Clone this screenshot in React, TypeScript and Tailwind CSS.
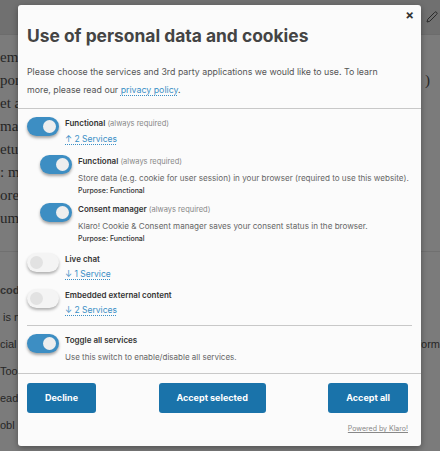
import React from "react";

function Toggle({ on }: { on: boolean }) {
  return on ? (
    <div className="flex h-[19px] w-[32px] shrink-0 items-center justify-end rounded-full bg-[#3d8ec3] pr-[3px] shadow-[0_2px_3px_rgba(0,0,0,0.35)]">
      <div className="h-[13px] w-[13px] rounded-full bg-[#eeeeee]" />
    </div>
  ) : (
    <div className="flex h-[19px] w-[32px] shrink-0 items-center justify-start rounded-full bg-[#f4f4f4] pl-[3px] shadow-[0_2px_3px_rgba(0,0,0,0.3)]">
      <div className="h-[13px] w-[13px] rounded-full bg-[#e2e2e2]" />
    </div>
  );
}

function Link({ children }: { children: React.ReactNode }) {
  return (
    <div className="mt-[3px] text-[8.5px] leading-[12px]">
      <span className="text-[#3a8fc6] underline decoration-dotted underline-offset-2">{children}</span>
    </div>
  );
}

function Group({
  on,
  title,
  required,
  link,
}: {
  on: boolean;
  title: string;
  required?: boolean;
  link: string;
}) {
  return (
    <div className="flex gap-[6px]">
      <Toggle on={on} />
      <div className="flex flex-col">
        <div className="text-[8px] leading-[12px] text-[#333]">
          <span className="font-semibold">{title}</span>
          {required && <span className="text-[7.5px] text-[#888]"> (always required)</span>}
        </div>
        <Link>{link}</Link>
      </div>
    </div>
  );
}

function Service({ title, desc }: { title: string; desc: string }) {
  return (
    <div className="flex gap-[6px] pl-[13px]">
      <Toggle on={true} />
      <div className="flex flex-col">
        <div className="text-[8px] leading-[12px] text-[#333]">
          <span className="font-semibold">{title}</span>
          <span className="text-[7.5px] text-[#888]"> (always required)</span>
        </div>
        <div className="mt-[4px] text-[8.1px] leading-[13px] text-[#666]">{desc}</div>
        <div className="text-[7px] font-medium leading-[11px] text-[#333]">Purpose: Functional</div>
      </div>
    </div>
  );
}

export default function App() {
  const serif = { fontFamily: '"Liberation Serif", serif' };
  const btn = "h-[30px] rounded-[3px] bg-[#1a73aa] px-[18px] text-[9px] font-bold leading-[30px] text-white";
  return (
    <div
      className="relative h-[451px] w-[440px] overflow-hidden bg-[#7b7b7b]"
      style={{ fontFamily: "Inter, sans-serif" }}
    >
      {/* background page (dimmed) */}
      <div className="flex h-[35px] items-center justify-end border-b border-[#6c6c6c] bg-[#707070] pr-[2px]">
        <svg width="12" height="12" viewBox="0 0 24 24" fill="none" stroke="#2a2a2a" strokeWidth="2">
          <path d="M17 3a2.85 2.85 0 1 1 4 4L7.5 20.5 2 22l1.5-5.5Z" />
        </svg>
      </div>
      <div className="flex flex-col pt-[11px] text-[15px] leading-[23px] text-[#262626]" style={serif}>
        <div>em ipsum</div>
        <div className="flex justify-between pr-[10px]">
          <span>por</span>
          <span>)</span>
        </div>
        <div>et a</div>
        <div>mat</div>
        <div>etur</div>
        <div>: ma</div>
        <div>ores</div>
        <div>um c</div>
      </div>
      <div className="mt-[21px] h-px w-full bg-[#707070]" />
      <div
        className="flex flex-col pt-[25px] text-[11px] leading-[27px] text-[#262626]"
        style={{ fontFamily: '"Liberation Sans", sans-serif' }}
      >
        <div className="font-bold text-[#333]">codo</div>
        <div>&nbsp;is n</div>
        <div className="flex justify-between">
          <span>cial a</span>
          <span>form</span>
        </div>
        <div>Tool</div>
        <div>ead</div>
        <div>obl</div>
      </div>

      {/* modal */}
      <div className="absolute left-[18px] top-[5px] flex h-[441px] w-[403px] flex-col rounded-[3px] bg-[#fbfbfb] shadow-[0_2px_6px_rgba(0,0,0,0.35)]">
        <div className="absolute right-[7px] top-[4px] text-[13px] font-bold leading-[13px] text-[#333]">×</div>
        <div className="border-b border-[#c8c8c8] px-[9px] pb-[9px] pt-[19px]">
          <h1 className="text-[17.4px] font-bold leading-[24px] text-[#444]">Use of personal data and cookies</h1>
          <p className="mt-[15px] max-w-[362px] text-[8.8px] leading-[18px] text-[#555]">
            Please choose the services and 3rd party applications we would like to use. To learn more, please
            read our{" "}
            <span className="text-[#3a8fc6] underline decoration-dotted underline-offset-2">privacy policy</span>.
          </p>
        </div>
        <div className="flex flex-col px-[9px] pt-[8px]">
          <Group on={true} title="Functional" required link="↑ 2 Services" />
          <div className="mt-[10px] flex flex-col gap-[7px]">
            <Service
              title="Functional"
              desc="Store data (e.g. cookie for user session) in your browser (required to use this website)."
            />
            <Service
              title="Consent manager"
              desc="Klaro! Cookie & Consent manager saves your consent status in the browser."
            />
          </div>
          <div className="mt-[9px]">
            <Group on={false} title="Live chat" link="↓ 1 Service" />
          </div>
          <div className="mt-[9px]">
            <Group on={false} title="Embedded external content" link="↓ 2 Services" />
          </div>
          <div className="mt-[9px] h-px bg-[#c8c8c8]" />
          <div className="mt-[8px] flex gap-[6px]">
            <Toggle on={true} />
            <div className="flex flex-col">
              <div className="text-[8px] font-semibold leading-[12px] text-[#333]">Toggle all services</div>
              <div className="mt-[5px] text-[8px] leading-[12px] text-[#666]">
                Use this switch to enable/disable all services.
              </div>
            </div>
          </div>
        </div>
        <div className="mt-[10px] border-t border-[#c8c8c8] pl-[9px] pr-[13px] pt-[9px]">
          <div className="flex justify-between">
            <button className={btn}>Decline</button>
            <button className={btn}>Accept selected</button>
            <button className={btn}>Accept all</button>
          </div>
          <div className="mt-[11px] flex justify-end text-[7px] leading-[10px]">
            <span className="text-[#888] underline">Powered by Klaro!</span>
          </div>
        </div>
      </div>
    </div>
  );
}
